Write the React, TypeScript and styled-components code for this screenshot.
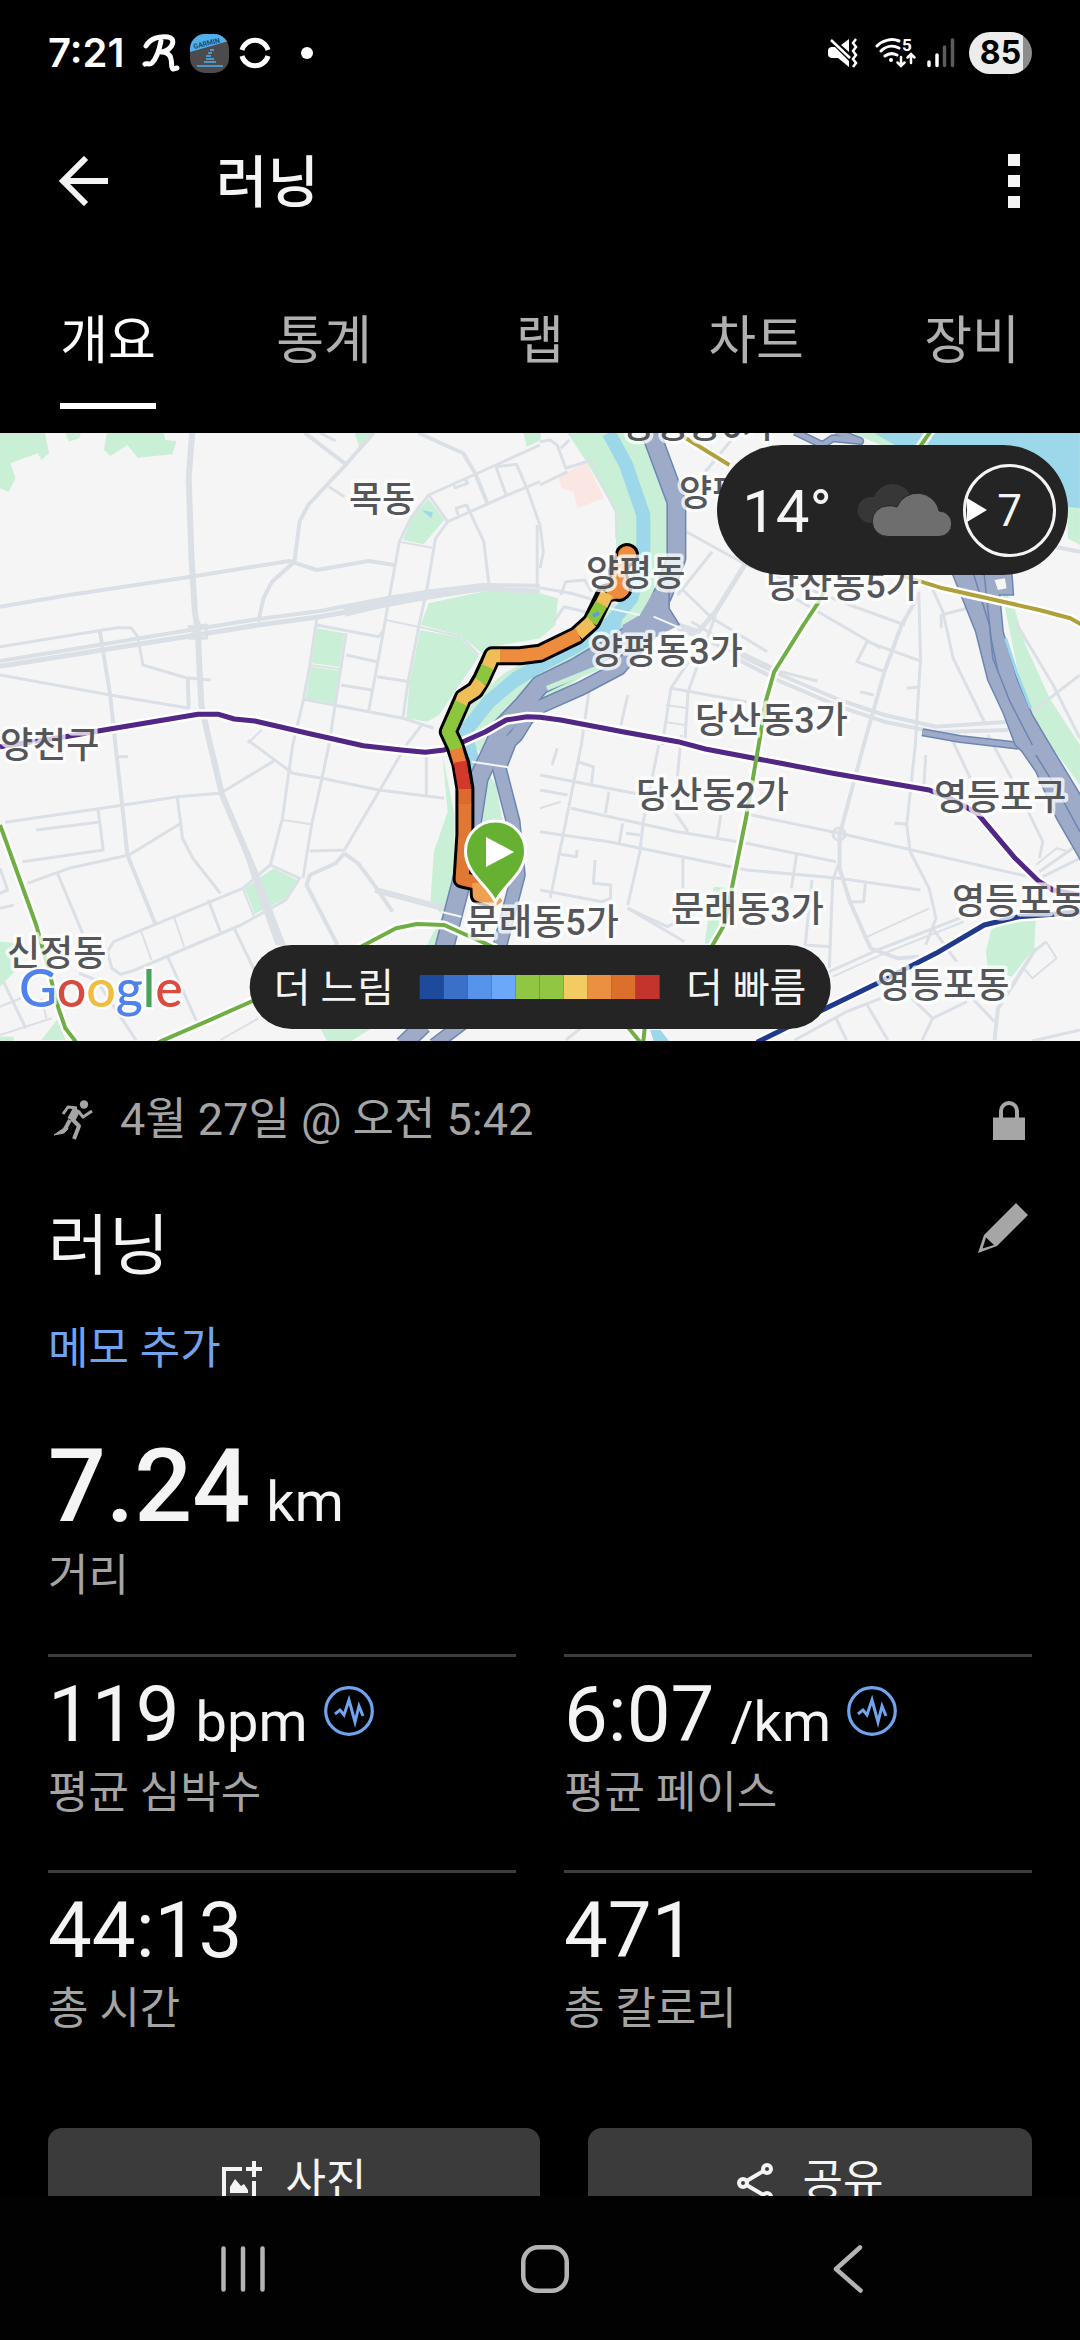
import React from "react";
import styled, { createGlobalStyle } from "styled-components";

const GlobalStyle = createGlobalStyle`
  * { box-sizing: border-box; }
  body { margin: 0; background: #000; }
  button { font: inherit; color: inherit; background: none; border: 0; padding: 0; margin: 0; cursor: pointer; }
  h1, h2, p, dl, dt, dd { margin: 0; font-weight: inherit; font-size: inherit; }
  svg { display: block; flex: none; }
`;

const fontStack = `Roboto, "Noto Sans CJK KR", sans-serif`;

/* ---------- page frame ---------- */

const Screen = styled.div`
  height: 100vh;
  display: flex;
  flex-direction: column;
  background: #000;
  color: #f4f4f4;
  font-family: ${fontStack};
`;

const StatusBar = styled.div`
  flex: none;
  height: 106px;
  padding: 0 48px;
  display: flex;
  align-items: center;
  justify-content: space-between;
`;

const StatusGroup = styled.div`
  display: flex;
  align-items: center;
  gap: 10px;
`;

const Clock = styled.time`
  font-family: Inter, Roboto, sans-serif;
  font-size: 40px;
  line-height: 48px;
  font-weight: 600;
  color: #fff;
  margin-right: 8px;
`;

const Battery = styled.div`
  width: 63px;
  height: 42px;
  margin-left: 4px;
  border-radius: 21px;
  display: flex;
  align-items: center;
  justify-content: center;
  background: linear-gradient(90deg, #ececec 85%, #8c8c8c 85%);
  font-family: Inter, Roboto, sans-serif;
  font-size: 32px;
  line-height: 42px;
  font-weight: 700;
  color: #000;
`;

const AppBar = styled.header`
  flex: none;
  height: 150px;
  padding: 0 48px;
  display: flex;
  align-items: center;
`;

const IconButton = styled.button`
  display: flex;
  align-items: center;
  justify-content: center;
  width: 72px;
  height: 72px;
`;

const AppTitle = styled.h1`
  flex: 1;
  padding: 4px 0 0 96px;
  font-size: 56px;
  line-height: 72px;
  font-weight: 500;
`;

const MenuButton = styled(IconButton)`
  justify-content: flex-end;
  padding-right: 12px;
`;

const TabBar = styled.nav`
  flex: none;
  display: grid;
  grid-template-columns: repeat(5, 1fr);
  justify-items: center;
  padding: 54px 0 24px;
`;

const Tab = styled.button<{ $active?: boolean }>`
  padding-bottom: 29px;
  border-bottom: 6px solid ${(p) => (p.$active ? "#fff" : "transparent")};
  font-size: 52px;
  line-height: 64px;
  color: ${(p) => (p.$active ? "#fff" : "#b0b0b0")};
`;

const Main = styled.main`
  flex: 1;
  min-height: 0;
  overflow-y: auto;
  scrollbar-width: none;
`;

/* ---------- map ---------- */

const MapPanel = styled.section`
  position: relative;
  height: 608px;
  overflow: hidden;
  background: #f5f5f5;
`;

const MapCanvas = styled.svg`
  width: 100%;
  height: 100%;
`;

const WeatherPill = styled.div`
  position: absolute;
  top: 12px;
  right: 12px;
  height: 130px;
  padding: 0 12px 0 25px;
  border-radius: 65px;
  background: #242424;
  display: flex;
  align-items: center;
`;

const Temperature = styled.span`
  font-size: 60px;
  line-height: 72px;
  margin: 4px 25px 0 0;
`;

const Wind = styled.div`
  position: relative;
  width: 93px;
  height: 93px;
  margin-left: 12px;
  border: 3px solid #f4f4f4;
  border-radius: 50%;
  display: flex;
  align-items: center;
  justify-content: center;
  padding-top: 2px;
  font-size: 44px;
  line-height: 48px;
`;

const WindArrow = styled.svg`
  position: absolute;
  left: 1px;
  top: 50%;
  transform: translateY(-50%);
`;

const Legend = styled.div`
  position: absolute;
  left: 50%;
  bottom: 12px;
  transform: translateX(-50%);
  height: 84px;
  padding: 0 24px;
  border-radius: 42px;
  background: #242424;
  display: flex;
  align-items: center;
  gap: 26px;
  font-size: 40px;
  line-height: 48px;
  white-space: nowrap;
`;

const LegendLabel = styled.span`
  padding-top: 4px;
`;

const Scale = styled.div`
  display: flex;
`;

const Swatch = styled.span<{ $color: string }>`
  width: 24px;
  height: 24px;
  background: ${(p) => p.$color};
`;

/* ---------- activity details ---------- */

const Details = styled.div`
  padding: 51px 48px 48px;
`;

const MetaRow = styled.div`
  display: flex;
  align-items: center;
  height: 56px;
  color: #a4a4a4;
  font-size: 45px;
  line-height: 56px;
`;

const MetaText = styled.p`
  flex: 1;
  padding-left: 23px;
`;

const TitleRow = styled.div`
  display: flex;
  align-items: flex-start;
  justify-content: space-between;
  margin-top: 54px;
`;

const ActivityName = styled.h2`
  padding-top: 3px;
  font-size: 66px;
  line-height: 84px;
  font-weight: 400;
`;

const EditButton = styled.button`
  padding: 1px 4px 0 0;
`;

const NoteLink = styled.a`
  display: inline-block;
  margin-top: 32px;
  font-size: 44px;
  line-height: 56px;
  color: #70a4ee;
  text-decoration: none;
`;

const Stat = styled.div<{ $lined?: boolean }>`
  display: flex;
  flex-direction: column;
  height: ${(p) => (p.$lined ? "216px" : "auto")};
  padding-top: ${(p) => (p.$lined ? "12px" : "0")};
  border-top: ${(p) => (p.$lined ? "3px solid #3e3e3e" : "0")};
`;

const Distance = styled(Stat)`
  margin: 47px 0 50px;
`;

const StatValue = styled.dd<{ $big?: boolean }>`
  display: flex;
  align-items: baseline;
  gap: 16px;
  order: -1;
  height: ${(p) => (p.$big ? 124 : 96)}px;
  font-size: ${(p) => (p.$big ? 102 : 78)}px;
  line-height: ${(p) => (p.$big ? 124 : 92)}px;
  font-weight: ${(p) => (p.$big ? 500 : 400)};
`;

const Unit = styled.span`
  font-size: 56px;
  line-height: 64px;
  font-weight: 400;
`;

const StatLabel = styled.dt`
  font-size: 44px;
  line-height: 56px;
  color: #a4a4a4;
`;

const StatGrid = styled.dl`
  display: grid;
  grid-template-columns: 1fr 1fr;
  column-gap: 48px;
`;

const ZoneButton = styled.button`
  align-self: flex-start;
  padding-top: 17px;
`;

const Actions = styled.div`
  display: grid;
  grid-template-columns: 41fr 37fr;
  column-gap: 48px;
  margin-top: 42px;
`;

const ActionButton = styled.button`
  height: 106px;
  border-radius: 14px;
  background: #3b3b3b;
  display: flex;
  align-items: center;
  justify-content: center;
  gap: 24px;
  font-size: 44px;
  line-height: 56px;
`;

const NavBar = styled.nav`
  flex: none;
  height: 144px;
  padding: 2px 81px 0 92px;
  display: grid;
  grid-template-columns: repeat(3, 1fr);
  background: #020202;
`;

const NavButton = styled.button`
  display: flex;
  align-items: center;
  justify-content: center;
`;

/* ---------- map data: four survey sheets joined into one canvas ---------- */

type Sheet = (pts: string) => string;
const sheet =
  (ox: number, oy: number): Sheet =>
  (pts) =>
    pts
      .split(" ")
      .map((p) => {
        const [x, y] = p.split(",").map(Number);
        return `${(ox + x / 2.904).toFixed(1)},${(oy + y / 3).toFixed(1)}`;
      })
      .join(" ") + " ";

const nw = sheet(0, -8);
const ne = sheet(540, -8);
const sw = sheet(0, 302);
const se = sheet(540, 302);

const parks = [
  nw("0,24 130,24 143,85 120,105 110,85 30,115 45,160 25,200 0,190"),
  nw("190,24 235,24 230,40 200,50"),
  nw("310,24 475,24 480,45 513,48 500,88 400,98 370,60 320,93 302,75"),
  nw("1030,24 1085,24 1045,70"),
  nw("1520,24 1570,24 1570,45 1530,65"),
  nw("1245,222 1290,285 1230,358 1170,345 1200,270"),
  nw("920,610 1000,625 985,725 905,715"),
  nw("903,725 985,737 970,835 888,820"),
  nw("1245,535 1400,500 1480,498 1568,505") + ne("52,520 45,600 0,640") + nw("1430,665 1400,685 1340,632 1222,600"),
  nw("1220,615 1335,637 1390,695 1275,870 1240,890 1180,880 1190,770"),
  sw("795,400 862,435 830,490 740,537 710,460"),
  sw("0,620 60,625 60,690 0,755"),
  sw("120,915 170,850 190,915"),
  sw("0,905 40,905 40,918 0,918"),
  sw("1285,60 1320,240 1320,440 1340,470 1290,640 1235,640 1285,540 1250,500 1260,350 1300,230"),
  sw("930,880 1080,880 1020,918 950,918"),
  ne("80,24 320,24 375,230 370,400 330,500 290,590 230,600 220,330 220,260 135,110"),
  ne("905,24 1100,24 1100,80 990,60"),
  ne("1530,230 1568,250 1568,360 1533,340"),
  ne("1335,470 1375,540 1410,660 1480,820 1568,960") + se("1568,150 1460,0") + ne("1400,800"),
  se("505,455 555,460 540,560 500,630 478,625 490,540"),
  se("1310,585 1370,550 1440,555 1435,640 1370,725 1300,700 1295,650"),
  sw("1420,120 1440,150 1460,260 1380,260 1400,180"),
];

const blocks = [
  nw("1225,255 1257,262 1252,280"),
  ne("970,24 1568,24 1568,250 1400,230 1080,90"),
];

const roads: [string, number][] = [
  [nw("558,24 548,160 556,400 566,560 575,625 578,700 585,840 605,935") + sw("645,180 740,410 820,630"), 6],
  [nw("0,545 200,510 555,455 840,408 920,435 1070,408 1145,420"), 4],
  [nw("0,665 340,608 380,608 400,635 415,720 540,758 612,765"), 3],
  [nw("0,708 570,612 750,582 930,558 1130,518 1240,500 1400,480 1568,482"), 4],
  [nw("0,724 570,630 750,600 930,575 1130,538 1240,515 1400,492 1568,498"), 5],
  [nw("1000,562 1130,530 1300,500"), 9],
  [nw("885,24 1005,118"), 4],
  [nw("930,24 975,48"), 3],
  [nw("1085,24 1005,118 895,240 870,290 855,410 790,470 765,520 750,590"), 4],
  [nw("955,185 1000,215"), 3],
  [nw("1215,24 1345,85 1380,145 1415,235"), 4],
  [nw("1568,60 1440,120 1245,210 1195,275 1160,350 1130,520 1110,640 1070,860"), 3],
  [nw("1568,170 1470,212 1300,290 1265,340 1240,490 1215,610 1185,770 1170,880"), 3],
  [nw("1245,210 1300,290"), 3],
  [nw("1440,125 1500,118 1530,190 1568,300"), 3],
  [nw("1440,125 1470,210"), 3],
  [nw("1315,175 1322,188 1358,175 1350,160"), 3],
  [nw("1330,270 1325,250 1355,240 1405,350 1420,480"), 3],
  [nw("1560,300 1560,490"), 3],
  [nw("1160,350 1255,368"), 2],
  [nw("920,580 900,720 880,830 850,960") + sw("820,250 785,390 705,460"), 3],
  [nw("920,600 1100,635 1115,615"), 3],
  [nw("1005,625 975,830 955,960") + sw("935,130 905,270 880,430"), 3],
  [nw("880,822 980,842 1170,880 1260,910"), 3],
  [nw("1005,690 1095,710"), 3],
  [nw("990,780 1080,795"), 3],
  [nw("1095,755 1190,770"), 3],
  [nw("900,720 990,733"), 2],
  [nw("0,750 320,810 550,850"), 3],
  [nw("290,620 320,810 335,960") + sw("355,210 370,360 450,565"), 4],
  [nw("545,760 548,850"), 4],
  [nw("1120,585 1215,605 1340,635 1390,690"), 2],
  [nw("1225,900 1180,960") + sw("1100,170 1000,345 900,348"), 3],
  [nw("760,915 720,955"), 2],
  [nw("545,605 600,600 600,640 550,640 580,590"), 3],
  [sw("15,262 360,210 515,185 640,175 800,75"), 3],
  [sw("720,15 850,115 935,130 1100,165 1290,190"), 3],
  [sw("820,255 905,268"), 2],
  [sw("335,65 372,65"), 3],
  [sw("1000,355 975,385 900,420 890,450 980,630"), 4],
  [sw("1000,355 1040,385 1080,440 1140,530"), 4],
  [sw("1238,60 1238,185"), 3],
  [sw("515,185 530,310 560,370 640,475"), 3],
  [sw("105,285 285,262"), 3],
  [sw("285,225 300,345 65,380"), 3],
  [sw("525,265 375,360 200,400 80,445"), 3],
  [sw("165,410 240,595"), 3],
  [sw("400,590 705,460"), 3],
  [sw("400,590 330,620 312,650 325,700 350,718 385,708 700,570 830,495 870,430 785,390"), 3],
  [sw("410,590 440,675"), 2],
  [sw("505,545 535,635"), 2],
  [sw("605,495 640,590"), 3],
  [sw("705,460 740,550"), 2],
  [sw("680,580 750,730"), 3],
  [sw("485,660 580,880"), 3],
  [sw("0,900 150,850"), 2],
  [sw("0,815 60,790"), 2],
  [sw("10,740 75,880"), 3],
  [sw("120,790 135,850"), 2],
  [sw("0,520 40,510"), 3],
  [sw("0,400 22,465 0,475"), 3],
  [sw("230,715 280,735 340,830 395,915"), 3],
  [sw("640,915 750,850"), 2],
  [sw("1090,465 1290,520"), 6],
  [ne("0,50 30,45 50,60 75,130 150,105"), 3],
  [ne("60,70 85,45"), 3],
  [ne("0,180 80,140"), 3],
  [ne("150,105 165,150 220,260 222,340"), 2],
  [ne("0,300 10,380 0,430"), 3],
  [ne("0,488 90,505 240,550"), 3],
  [ne("60,510 75,470 130,465 150,500"), 3],
  [ne("40,590 70,545 130,560 160,590"), 3],
  [ne("425,320 600,420"), 3],
  [ne("400,510 500,380"), 3],
  [ne("600,410 510,560 460,620 400,600"), 5],
  [ne("560,40 480,140"), 3],
  [ne("400,480 500,580 660,680"), 3],
  [ne("440,590 600,690 700,740 805,768"), 3],
  [ne("400,610 560,680 700,750 870,825 1000,870 1150,905 1360,890"), 4],
  [ne("560,695 700,770 870,845 1000,890 1150,922 1360,915"), 4],
  [ne("740,520 990,670"), 3],
  [ne("600,420 900,540 1060,600"), 3],
  [ne("1100,510 1050,600 1000,740 940,960") + se("870,300 870,400 900,500 960,640 1040,670 1100,665"), 4],
  [ne("1100,500 1105,700 1090,960") + se("1065,270 1075,350 1130,460 1150,550 1120,630"), 3],
  [ne("1240,550 1165,570 1165,610"), 3],
  [ne("1110,710 950,650 920,710 1000,740"), 3],
  [ne("930,800 970,810"), 3],
  [ne("1065,790 1105,785"), 3],
  [ne("1130,470 1170,560 1200,700 1290,890"), 3],
  [ne("510,570 430,800 420,960"), 3],
  [ne("450,680 380,790 355,960"), 3],
  [ne("380,790 600,830"), 3],
  [ne("365,840 430,850"), 2],
  [ne("360,890 420,900"), 2],
  [ne("255,810 235,900"), 3],
  [ne("145,780 120,960") + se("30,490"), 3],
  [ne("1470,360 1568,380"), 4],
  [ne("1568,750 1430,860"), 3],
  [ne("1380,590 1490,780 1568,940"), 3],
  [se("0,120 300,180"), 3],
  [se("110,80 155,95 150,145"), 3],
  [se("0,165 80,180"), 3],
  [se("200,170 190,235"), 3],
  [se("50,40 35,90"), 3],
  [se("345,30 300,260 290,350 255,510"), 3],
  [se("0,290 200,320 600,405 870,430 1105,465"), 3],
  [se("90,220 400,290 600,325 860,380"), 3],
  [se("590,235 870,295 1080,345 1440,430"), 3],
  [se("410,0 390,230 430,290"), 3],
  [se("525,240 515,310"), 3],
  [se("240,265 230,325"), 3],
  [se("250,295 290,300"), 3],
  [se("415,370 415,460"), 3],
  [se("745,360 730,460"), 3],
  [se("790,435 770,630 845,635"), 3],
  [se("870,380 850,435 840,700"), 3],
  [se("255,520 370,575 480,520"), 3],
  [se("255,520 420,620"), 3],
  [se("0,465 180,500 205,490 205,450 155,445 160,375"), 3],
  [se("60,358 105,365 108,345"), 3],
  [se("1030,265 1065,268"), 3],
  [se("1120,60 1115,150"), 3],
  [se("840,710 980,645 1230,545"), 3],
  [se("850,725 1000,655 1230,560"), 2],
  [se("900,500 940,500 945,445"), 3],
  [se("940,610 1130,520"), 2],
  [se("1300,0 1380,150 1460,320 1450,370"), 3],
  [se("1190,0 1250,130"), 3],
  [se("1450,410 1560,330"), 3],
  [se("1460,425 1568,370"), 3],
  [se("1440,390 1500,340 1540,350"), 2],
  [se("1470,620 1500,670 1430,730 1405,700"), 2],
  [se("1470,620 1440,645"), 3],
  [se("1440,640 1330,820 1320,915"), 4],
  [se("1255,790 1320,860"), 3],
  [se("1080,790 1140,850 1240,800"), 3],
  [se("1140,850 1110,915"), 3],
  [se("950,810 1010,915"), 3],
  [se("740,915 890,830 990,790"), 3],
  [se("860,850 890,915"), 3],
  [se("1140,580 1210,680"), 3],
  [se("1430,918 1568,885"), 3],
  [se("75,915 130,870"), 3],
  [se("0,220 60,200"), 2],
];

const water =
  ne("200,24 250,120 300,270 300,400 265,520 200,600 100,655 0,720") +
  nw("1500,760 1420,830 1350,920") +
  sw("1370,70 1370,120");

const highways: [string, number][] = [
  [ne("322,24 396,230 396,400 360,500 320,590 230,650 100,730 0,780") + nw("1520,840 1450,915") + sw("1440,20 1390,130 1350,400 1290,640"), 20],
  [ne("370,560 230,730 120,790 0,845") + nw("1530,880 1500,930") + sw("1480,20 1450,100 1490,260 1505,420 1480,520 1450,640"), 15],
  [sw("1170,930 1230,870"), 18],
  [sw("1260,930 1350,860"), 14],
  [ne("1110,922 1220,942 1390,962"), 8],
  [ne("740,20 820,60 850,40 930,48 860,20"), 8],
];

const metro: [string, string, number][] = [
  ["#512684", sw("0,35 190,5") + nw("285,918 575,868 635,868 680,882 740,888 900,926") + sw("1055,32 1165,45 1235,52 1290,45 1345,20") + nw("1410,920 1470,885 1530,875") + ne("0,877 60,885 240,920 400,950") + se("480,42 700,85 850,115 1130,165 1190,190 1270,235 1380,370 1450,440 1490,465 1568,480"), 5],
  ["#6fae44", sw("0,270 35,370 105,570 140,700 170,820 190,880 220,920"), 4],
  ["#6fae44", sw("460,922 620,850 740,795"), 4],
  ["#6fae44", sw("1040,640 1150,580 1210,567 1290,570 1440,640"), 4],
  ["#6fae44", ne("830,490 810,530 765,600 680,740 655,830 640,930") + se("620,120 600,240 555,470 535,570 490,650"), 4],
  ["#6fae44", ne("1140,10 1100,70"), 4],
  ["#6fae44", se("250,870 290,920"), 4],
  ["#6fae44", se("305,870 300,920"), 4],
  ["#b0a03c", ne("405,28 550,120"), 4],
  ["#b0a03c", ne("1050,452 1170,490 1300,520 1450,555 1540,580 1575,600"), 4],
  ["#1f3a8c", se("630,922 820,825 980,745 1150,655 1290,570 1390,545 1490,538 1568,530"), 5],
];

const routeOutline =
  ne("252,385 225,440 240,495 190,505 150,590 105,632 0,685") +
  nw("1510,692 1430,692 1400,760 1380,795 1345,818 1302,920") +
  sw("1320,30 1338,85 1350,160 1350,300 1342,432 1392,444 1392,480 1430,492");

const routeParts: [string, string][] = [
  ["#ee8c3e", ne("252,385 225,440 240,495 195,508")],
  ["#f0be58", ne("195,505 178,540")],
  ["#8cc63c", ne("178,538 148,592")],
  ["#f0be58", ne("150,590 110,628")],
  ["#ee8c3e", ne("112,628 0,685") + nw("1510,692 1450,692")],
  ["#f0be58", nw("1452,692 1430,692 1415,728")],
  ["#8cc63c", nw("1416,725 1395,772")],
  ["#f0be58", nw("1396,770 1380,795 1345,818 1338,838")],
  ["#8cc63c", nw("1339,834 1302,920") + sw("1320,30 1326,45")],
  ["#ea8038", sw("1324,42 1336,85")],
  ["#d4382a", sw("1336,80 1350,165")],
  ["#dc6a2c", sw("1350,162 1350,210")],
  ["#e07834", sw("1350,208 1350,300 1342,432 1392,444")],
  ["#f0a050", sw("1390,443 1392,480 1430,492 1445,510")],
];

const labels: [number, number, string][] = [
  [349, 79, "목동"],
  [622, 5, "양평동6가"],
  [679, 73, "양평동"],
  [586, 153, "양평동"],
  [766, 165, "당산동5가"],
  [590, 231, "양평동3가"],
  [695, 300, "당산동3가"],
  [636, 375, "당산동2가"],
  [934, 377, "영등포구"],
  [0, 325, "양천구"],
  [7, 533, "신정동"],
  [466, 502, "문래동5가"],
  [671, 489, "문래동3가"],
  [952, 481, "영등포동"],
  [877, 565, "영등포동"],
];

const googleLetters: [string, string][] = [
  ["G", "#4f82ea"],
  ["o", "#d64b40"],
  ["o", "#f0be3e"],
  ["g", "#4f82ea"],
  ["l", "#46a45a"],
  ["e", "#dc4a40"],
];

function RouteMap() {
  return (
    <MapCanvas viewBox="0 0 1080 608" preserveAspectRatio="xMidYMid slice" role="img" aria-label="러닝 경로">
      <rect width="1080" height="608" fill="#f5f5f5" />
      <g fill="#c9efd6">{parks.map((d, i) => <polygon key={i} points={d} />)}</g>
      <g fill="#9cd8ea">{blocks.map((d, i) => <polygon key={i} points={d} />)}</g>
      <polygon points={ne("55,155 135,110 185,220 108,250 98,200 62,190")} fill="#fae6e2" />
      <polyline points={ne("240,560 100,690 0,760") + nw("1500,800 1350,930")} fill="none" stroke="#c9efd6" strokeWidth="44" />
      <g fill="none" stroke="#dbe0e6" strokeLinejoin="round">
        {roads.map(([d, w], i) => <polyline key={i} points={d} strokeWidth={w} />)}
        <circle cx="839" cy="401" r="6" strokeWidth="3" />
      </g>
      <polygon points={sw("685,275 740,400 830,630 800,630 735,440")} fill="#dbe0e6" />
      <polyline points={water} fill="none" stroke="#9cd8ea" strokeWidth="14" strokeLinejoin="round" />
      <polygon points={ne("190,580 240,570 235,610 100,690 0,745") + nw("1480,800 1500,750") + ne("0,715 120,650")} fill="#9cd8ea" />
      <g fill="none" strokeLinejoin="round">
        {highways.map(([d, w], i) => <polyline key={i} points={d} stroke="#6c86b2" strokeWidth={w} />)}
        {highways.map(([d, w], i) => <polyline key={i} points={d} stroke="#9dabc9" strokeWidth={w - 3} />)}
      </g>
      <polygon points={ne("330,500 380,490 375,550 405,600 330,640 240,650 240,600 290,570")} fill="#9dabc9" />
      <polyline points={ne("375,490 375,550 405,600")} fill="none" stroke="#6c86b2" strokeWidth="1.5" />
      <polygon
        points={
          ne("1195,440 1230,530 1265,620 1300,765 1345,865 1380,960") +
          se("1400,50 1440,110 1500,250 1575,385 1575,190 1470,10") +
          ne("1430,870 1385,760 1345,620 1335,510 1375,510 1370,440")
        }
        fill="#9dabc9"
        stroke="#6c86b2"
        strokeWidth="1.5"
      />
      <g fill="none" stroke="#6c86b2" strokeWidth="1.5">
        <polyline points={ne("1260,450 1305,600 1315,700 1365,830 1430,960")} />
        <polyline points={ne("1290,450 1310,640 1330,740")} />
        <polyline points={se("1440,60 1500,160 1568,290")} />
      </g>
      <polyline points={ne("1352,640 1385,745 1425,850")} fill="none" stroke="#9cd8ea" strokeWidth="3" />
      <polygon points={ne("1320,465 1350,460 1355,490 1330,495")} fill="#f5f5f5" />
      <polyline points={ne("20,790 200,715")} fill="none" stroke="#c9efd6" strokeWidth="5" />
      <polygon points={se("320,885 350,885 375,918 330,918")} fill="#9cd8ea" />
      <g fill="none" stroke="#f2f4f6" strokeWidth="2">
        <polyline points={ne("200,550 290,570")} />
        <polyline points={ne("330,575 410,610")} />
        <polyline points={sw("1370,80 1530,105")} />
        <polyline points={sw("1280,530 1340,545")} />
      </g>
      <g fill="none" strokeLinejoin="round">
        {metro.map(([, d, w], i) => <polyline key={i} points={d} stroke="#fff" strokeWidth={w + 5} />)}
        {metro.map(([c, d, w], i) => <polyline key={i} points={d} stroke={c} strokeWidth={w} />)}
      </g>
      <g fill="none" strokeLinejoin="round">
        <polyline points={routeOutline} stroke="#000" strokeWidth="19" />
        <circle cx="627" cy="122" r="12" fill="#000" />
        <circle cx="619" cy="158" r="11" fill="#000" />
        {routeParts.map(([c, d], i) => <polyline key={i} points={d} stroke={c} strokeWidth="13" />)}
        <circle cx="627" cy="122" r="9" fill="#ee8c3e" />
        <circle cx="619" cy="157" r="9" fill="#ee8c3e" />
        <path d="M593 183l6-3" stroke="#5aa0e0" strokeWidth="4" />
      </g>
      <g
        fontFamily={fontStack}
        fontSize="36"
        fontWeight="500"
        fill="#55565a"
        stroke="#ffffff"
        strokeOpacity="0.75"
        strokeWidth="7"
        strokeLinejoin="round"
        style={{ paintOrder: "stroke" }}
      >
        {labels.map(([x, y, t], i) => (
          <text key={i} x={x} y={y}>{t}</text>
        ))}
      </g>
      <path
        d="M495.500 469C488 452 465.500 441 465.500 418a30 30 0 0 1 60 0C525.500 441 503 452 495.500 469Z"
        fill="#66b032"
        stroke="#fff"
        strokeWidth="3"
      />
      <path d="M486 404l28 15-28 15Z" fill="#fff" />
      <text
        x="19"
        y="574"
        fontFamily="Lato, sans-serif"
        fontSize="52"
        fontWeight="500"
        stroke="#fff"
        strokeOpacity="0.8"
        strokeWidth="5"
        style={{ paintOrder: "stroke" }}
      >
        {googleLetters.map(([ch, color], i) => (
          <tspan key={i} fill={color}>{ch}</tspan>
        ))}
      </text>
    </MapCanvas>
  );
}

/* ---------- icons ---------- */

const RunLogo = () => (
  <svg width="38" height="38" viewBox="0 0 38 38" fill="none" stroke="#fff" strokeWidth="5" strokeLinecap="round" strokeLinejoin="round">
    <path d="M4 12C8 4 18 2 26 3c8 1 6 12-6 15M19 7c-2 10-5 18-9 22-2 2-6 0-7 1M19 18c6 0 9 2 10 7 1 4 0 9 2 10l4-1" />
  </svg>
);

const GarminIcon = () => (
  <svg width="39" height="39" viewBox="0 0 39 39">
    <clipPath id="badge"><rect width="39" height="39" rx="15" /></clipPath>
    <g clipPath="url(#badge)">
      <rect width="39" height="39" fill="#4c4a4c" />
      <path d="M0 0h39v7L0 18Z" fill="#4fb0ea" />
      <text x="4" y="15" fontFamily="Roboto, sans-serif" fontSize="7" fontWeight="700" fill="#23486a" transform="rotate(-14 4 15)">GARMIN</text>
      <g stroke="#4fb0ea" strokeWidth="1.500">
        <path d="M20 16h4M18 19h4M16 22h5M16 25h8M14 28h12M7 32h26" />
      </g>
    </g>
  </svg>
);

const RingIcon = () => (
  <svg width="32" height="34" viewBox="0 0 32 34" fill="none" stroke="#fff" strokeWidth="5">
    <path d="M3 14a13.500 13.500 0 0 1 26 0M3 20a13.500 13.500 0 0 0 26 0" />
  </svg>
);

const MoreDot = () => (
  <svg width="50" height="12" viewBox="0 0 50 12">
    <circle cx="26" cy="6" r="6" fill="#fff" />
  </svg>
);

const MuteIcon = () => (
  <svg width="37" height="30" viewBox="0 0 37 30" fill="#fff">
    <path d="M0 12q0-2 3-3h4l14 14v6L10 20H3q-3-1-3-3ZM21 1v13l-8-7Z" />
    <path d="M3 2l19 18" stroke="#fff" strokeWidth="2.500" />
    <path d="M28 1l-3 4 3 4-3 4 3 4-3 4 3 4-3 4" fill="none" stroke="#fff" strokeWidth="2.500" />
  </svg>
);

const WifiIcon = () => (
  <svg width="42" height="32" viewBox="0 0 42 32" fill="none" stroke="#fff" strokeWidth="3" strokeLinecap="round">
    <path d="M2 9C8 3 17 1 24 4M6 14c5-5 12-6 18-3M10 19c4-3 8-3 12-1" />
    <circle cx="16" cy="23" r="2" fill="#fff" stroke="none" />
    <path d="M26 20v8M22.500 25.500l3.500 3.500 3.500-3.500M36 26v-8M32.500 20.500L36 17l3.500 3.500" strokeWidth="2.500" />
    <text x="27" y="14" fontFamily="Roboto, sans-serif" fontSize="17" fontWeight="700" fill="#fff" stroke="none">5</text>
  </svg>
);

const SignalIcon = () => (
  <svg width="28" height="30" viewBox="0 0 28 30" strokeWidth="3.500" strokeLinecap="round">
    <path d="M2 24v3.500M10 17v10.500" stroke="#fff" />
    <path d="M17.500 9v18.500M25.500 2v25.500" stroke="#5c5c5c" />
  </svg>
);

const BackIcon = () => (
  <svg width="50" height="50" viewBox="0 0 50 50" fill="none" stroke="#f4f4f4" strokeWidth="6">
    <path d="M49 25H5M27 2L4 25l23 23" />
  </svg>
);

const MenuIcon = () => (
  <svg width="12" height="54" viewBox="0 0 12 54" fill="#f4f4f4">
    <path d="M0 0h12v12H0ZM0 21h12v12H0ZM0 42h12v12H0Z" />
  </svg>
);

const CloudIcon = () => (
  <svg width="94" height="54" viewBox="0 0 94 54">
    <path d="M13 40a13 13 0 0 1 1-26 4 4 0 0 1 3 0A20 20 0 0 1 54 13L50 40Z" fill="#373737" />
    <path
      d="M31 53.500a15 15 0 0 1-1-30.500 17 17 0 0 1 10 1A22 22 0 0 1 82 28a12.500 12.500 0 0 1 0 25.500Z"
      fill="#6e6e6e"
      stroke="#242424"
      strokeWidth="1"
    />
  </svg>
);

const RunnerIcon = () => (
  <svg width="49" height="44" viewBox="0 0 49 44" fill="none" stroke="#a4a4a4" strokeLinecap="butt" strokeLinejoin="round">
    <circle cx="36" cy="6.500" r="4.200" fill="#a4a4a4" stroke="none" />
    <path d="M29 11l-6 11" strokeWidth="8" />
    <path d="M29 10l-9-1-5 7" strokeWidth="3" />
    <path d="M31 14l4 5 9-6" strokeWidth="3" />
    <path d="M24 21l7 7-5 13" strokeWidth="4" />
    <path d="M22 22l-5 9" strokeWidth="4" />
    <path d="M19 28L6 37l10-2 4-4Z" fill="#a4a4a4" strokeWidth="1" />
  </svg>
);

const LockIcon = () => (
  <svg width="39" height="40" viewBox="0 0 39 40">
    <path d="M0 17.500h32V40H0Z" fill="#a6a6a6" />
    <path d="M8 18v-7a8 8 0 0 1 16 0v7" fill="none" stroke="#a6a6a6" strokeWidth="4" />
  </svg>
);

const PencilIcon = () => (
  <svg width="50" height="50" viewBox="0 0 50 50" fill="#a6a6a6">
    <path fillRule="evenodd" d="M38 0l12 12-31 31L0 50 6 32ZM8 34.500L4.500 45.500 16 42Z" />
  </svg>
);

const PulseIcon = () => (
  <svg width="50" height="50" viewBox="0 0 50 50" fill="none" stroke="#70a4ee">
    <circle cx="25" cy="25" r="23.300" strokeWidth="3.200" />
    <path d="M11 28l5-4 4 5 5-15 6 22 4-16 4 10" strokeWidth="3" />
  </svg>
);

const PhotoIcon = () => (
  <svg width="40" height="40" viewBox="0 0 40 40" fill="#f4f4f4">
    <path d="M0 6h20v4H4v26h26V20h4v20H0Z" />
    <path d="M30 0h4v6h6v4h-6v6h-4v-6h-6V6h6Z" />
    <path d="M8 32V26l5-8 6 7 3-2 4 6v3Z" />
  </svg>
);

const ShareIcon = () => (
  <svg width="42" height="40" viewBox="0 0 42 40" fill="none" stroke="#f4f4f4" strokeWidth="4">
    <circle cx="30" cy="8" r="4" />
    <circle cx="6" cy="22" r="4" />
    <circle cx="30" cy="36" r="4" />
    <path d="M9.500 20L26.500 10M9.500 24l17 10" />
  </svg>
);

/* ---------- page ---------- */

const tabs = ["개요", "통계", "랩", "차트", "장비"];

const paceColors = [
  "#1e4a9c", "#3a70c8", "#5694ec", "#6ca8fa", "#90c642",
  "#90c642", "#f2cc62", "#ea9040", "#da702c", "#c4342c",
];

const stats = [
  { label: "평균 심박수", value: "119", unit: "bpm", zone: true },
  { label: "평균 페이스", value: "6:07", unit: "/km", zone: true },
  { label: "총 시간", value: "44:13" },
  { label: "총 칼로리", value: "471" },
];

export default function App() {
  return (
    <Screen>
      <GlobalStyle />
      <StatusBar>
        <StatusGroup>
          <Clock>7:21</Clock>
          <RunLogo />
          <GarminIcon />
          <RingIcon />
          <MoreDot />
        </StatusGroup>
        <StatusGroup>
          <MuteIcon />
          <WifiIcon />
          <SignalIcon />
          <Battery>85</Battery>
        </StatusGroup>
      </StatusBar>

      <AppBar>
        <IconButton aria-label="뒤로"><BackIcon /></IconButton>
        <AppTitle>러닝</AppTitle>
        <MenuButton aria-label="더보기"><MenuIcon /></MenuButton>
      </AppBar>

      <TabBar>
        {tabs.map((t, i) => (
          <Tab key={t} $active={i === 0}>{t}</Tab>
        ))}
      </TabBar>

      <Main>
        <MapPanel>
          <RouteMap />
          <WeatherPill>
            <Temperature>14°</Temperature>
            <CloudIcon />
            <Wind>
              <WindArrow width="20" height="24" viewBox="0 0 20 24"><path d="M0 0l20 12L0 24Z" fill="#fff" /></WindArrow>
              7
            </Wind>
          </WeatherPill>
          <Legend>
            <LegendLabel>더 느림</LegendLabel>
            <Scale>
              {paceColors.map((c, i) => <Swatch key={i} $color={c} />)}
            </Scale>
            <LegendLabel>더 빠름</LegendLabel>
          </Legend>
        </MapPanel>

        <Details>
          <MetaRow>
            <RunnerIcon />
            <MetaText>4월 27일 @ 오전 5:42</MetaText>
            <LockIcon />
          </MetaRow>
          <TitleRow>
            <ActivityName>러닝</ActivityName>
            <EditButton aria-label="이름 수정"><PencilIcon /></EditButton>
          </TitleRow>
          <NoteLink href="#memo">메모 추가</NoteLink>

          <dl>
            <Distance>
              <StatLabel>거리</StatLabel>
              <StatValue $big>7.24<Unit>km</Unit></StatValue>
            </Distance>
          </dl>
          <StatGrid>
            {stats.map((s) => (
              <Stat key={s.label} $lined>
                <StatLabel>{s.label}</StatLabel>
                <StatValue>
                  {s.value}
                  {s.unit && <Unit>{s.unit}</Unit>}
                  {s.zone && <ZoneButton aria-label={`${s.label} 차트`}><PulseIcon /></ZoneButton>}
                </StatValue>
              </Stat>
            ))}
          </StatGrid>

          <Actions>
            <ActionButton><PhotoIcon />사진</ActionButton>
            <ActionButton><ShareIcon />공유</ActionButton>
          </Actions>
        </Details>
      </Main>

      <NavBar>
        <NavButton aria-label="최근 앱">
          <svg width="44" height="48" viewBox="0 0 44 48" stroke="#b4b4b4" strokeWidth="4.500" strokeLinecap="round">
            <path d="M2.500 3.500v41M22 3.500v41M41.500 3.500v41" />
          </svg>
        </NavButton>
        <NavButton aria-label="홈">
          <svg width="48" height="48" viewBox="0 0 48 48" fill="none" stroke="#b4b4b4" strokeWidth="4.500">
            <rect x="2.250" y="2.250" width="43.500" height="43.500" rx="15" />
          </svg>
        </NavButton>
        <NavButton aria-label="이전">
          <svg width="30" height="48" viewBox="0 0 30 48" fill="none" stroke="#b4b4b4" strokeWidth="4.500" strokeLinecap="round" strokeLinejoin="round">
            <path d="M27 2.500L3 24l24.500 21.500" />
          </svg>
        </NavButton>
      </NavBar>
    </Screen>
  );
}
